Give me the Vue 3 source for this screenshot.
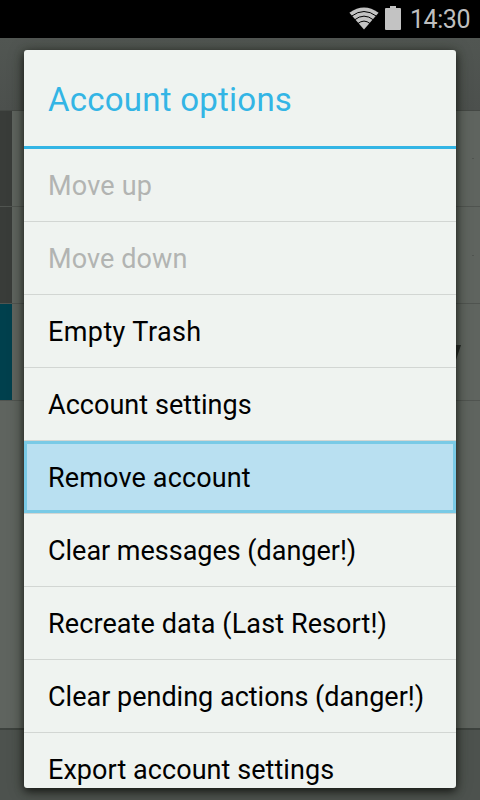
<script setup>
const options = [
  { label: 'Move up', spacing: 0.2, disabled: true },
  { label: 'Move down', spacing: 0.1, disabled: true },
  { label: 'Empty Trash', spacing: 0.4 },
  { label: 'Account settings', spacing: 0.04 },
  { label: 'Remove account', spacing: 0.15, active: true },
  { label: 'Clear messages (danger!)', spacing: -0.02 },
  { label: 'Recreate data (Last Resort!)', spacing: 0.1 },
  { label: 'Clear pending actions (danger!)', spacing: 0 },
  { label: 'Export account settings', spacing: 0.06 }
]
const accounts = ['dark', 'dark', 'teal']
</script>

<template>
  <div class="screen">
    <header class="status">
      <svg class="wifi" width="30" height="24" viewBox="0 0 30 24">
        <path d="M0.4 5.8Q15 -4.8 29.6 5.8L15 22.6Z" fill="#c3c3c3" />
        <g fill="none" stroke="#000" stroke-width="1">
          <path d="M2.5 9.2Q15 -0.2 27.5 9.2" />
          <path d="M5.5 12.9Q15 5.4 24.5 12.9" />
          <path d="M8.6 16.8Q15 11.4 21.4 16.8" />
        </g>
      </svg>
      <svg class="battery" width="16" height="24" viewBox="0 0 16 24">
        <path d="M5 0H11V2H15Q16 2 16 3V23Q16 24 15 24H1Q0 24 0 23V3Q0 2 1 2H5Z" fill="#c3c3c3" />
      </svg>
      <span class="clock">14:30</span>
    </header>
    <div class="toolbar"></div>
    <main class="accounts">
      <div v-for="(tone, i) in accounts" :key="i" class="account">
        <span class="chip" :class="tone"></span>
        <span v-if="i < 2" class="mark"></span>
        <svg v-else class="folder" width="13" height="15" viewBox="0 0 13 15">
          <path d="M0 0H13L8 15H0Z" fill="#252a26" />
        </svg>
      </div>
    </main>
    <footer class="bottom"></footer>
    <section class="dialog">
      <h1 class="title">Account options</h1>
      <ul class="options">
        <li v-for="o in options" :key="o.label" class="option" :class="{ disabled: o.disabled, active: o.active }">
          <span class="label" :style="{ letterSpacing: o.spacing + 'px' }">{{ o.label }}</span>
        </li>
      </ul>
    </section>
  </div>
</template>

<style>
body { margin: 0; background: #5f645f; }
</style>

<style scoped>
.screen {
  position: relative;
  width: 480px;
  height: 800px;
  overflow: hidden;
  display: flex;
  flex-direction: column;
  background: #5f645f;
  font-family: Roboto, "Noto Sans", sans-serif;
}
.status {
  box-sizing: border-box;
  height: 38px;
  flex: none;
  background: #000;
  display: flex;
  justify-content: flex-end;
  align-items: flex-start;
  padding: 6px 10px 0 0;
  color: #bebebe;
}
.wifi { margin: 1px 6px 0 0; }
.battery { margin-right: 9px; }
.clock { font-size: 25px; line-height: 28px; font-weight: 400; letter-spacing: -0.45px; }
.toolbar { height: 72px; flex: none; background: linear-gradient(#515652, #4c504d); }
.accounts { flex: 1; border-top: 1px solid #444844; }
.account {
  box-sizing: border-box;
  height: 97px;
  display: flex;
  align-items: center;
  border-bottom: 1px solid #505450;
}
.account:first-child { height: 96px; }
.chip { width: 12px; height: 100%; }
.dark { background: #393c39; }
.teal { background: #00404d; }
.mark { width: 2px; height: 1px; margin-left: auto; margin-right: 6px; background: #515551; }
.folder { margin-left: auto; margin-right: 19px; }
.bottom { box-sizing: border-box; height: 72px; flex: none; border-top: 2px solid #3d423e; background: #4d524e; }
.dialog {
  position: absolute;
  left: 24px;
  top: 50px;
  width: 432px;
  height: 738px;
  overflow: hidden;
  border-radius: 3px;
  background: #eff3f0;
  box-shadow: 0 3px 9px rgba(0, 0, 0, 0.65), 0 2px 16px rgba(25, 32, 16, 0.4);
}
.title {
  box-sizing: border-box;
  height: 99px;
  margin: 0;
  padding-left: 24px;
  border-bottom: 3px solid #33b5e5;
  color: #33b5e5;
  font-size: 33px;
  font-weight: 400;
  line-height: 99px;
  letter-spacing: 0.24px;
  white-space: nowrap;
}
.options { list-style: none; margin: 0; padding: 0; }
.option {
  box-sizing: border-box;
  height: 73px;
  padding-left: 24px;
  border-bottom: 1px solid #d2d6d3;
  color: #000;
  font-size: 27px;
  line-height: 74px;
  white-space: nowrap;
}
.disabled { color: #b2b4b2; }
.active { background: #b9e0f1; box-shadow: inset 0 0 0 3px #79cae6; }
</style>
